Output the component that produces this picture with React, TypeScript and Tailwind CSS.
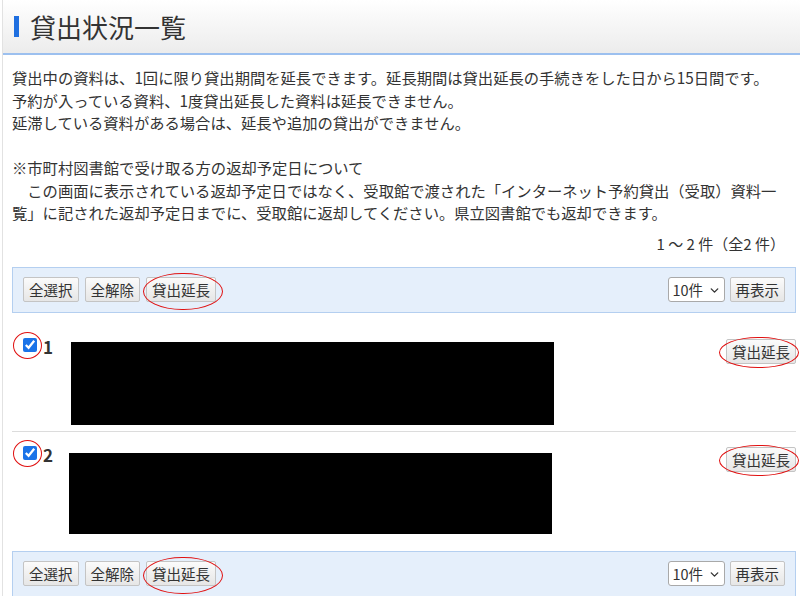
import { ChevronDown } from "lucide-react";

const FONT = { fontFamily: '"Noto Sans CJK JP", "Noto Sans", sans-serif' };

function Btn({ label, ring }: { label: string; ring?: string }) {
  return (
    <div className="relative">
      <button className="h-[25px] px-[5px] text-[14.5px] leading-none text-[#333] border border-[#c4c4c4] rounded-[2px] bg-gradient-to-b from-[#fbfbfb] to-[#e6e6e6]">
        {label}
      </button>
      {ring && <span className={`pointer-events-none absolute border-[1.5px] border-[#e01010] rounded-[50%] ${ring}`} />}
    </div>
  );
}

function Toolbar() {
  return (
    <div className="h-[46px] flex items-center justify-between px-[10px] border border-[#b4cff0] bg-[#e5effb]">
      <div className="flex gap-[6px]">
        <Btn label="全選択" />
        <Btn label="全解除" />
        <Btn label="貸出延長" ring="-left-[3px] -right-[7px] -top-[4px] -bottom-[8px]" />
      </div>
      <div className="flex gap-[5px] items-center">
        <div className="relative">
          <select className="appearance-none h-[25px] w-[57px] pl-[4px] text-[14.5px] text-[#333] bg-white border border-[#a9a9a9] rounded-[3px]">
            <option>10件</option>
          </select>
          <ChevronDown className="pointer-events-none absolute right-[4px] top-[7px] w-[13px] h-[13px] text-[#333]" strokeWidth={2.5} />
        </div>
        <Btn label="再表示" />
      </div>
    </div>
  );
}

function Row({ n, rectTop, rectH, rectLeft, border }: { n: number; rectTop: string; rectH: string; rectLeft: string; border?: boolean }) {
  return (
    <div className={`flex items-start pt-[14px] ${border ? "border-b border-[#dcdcdc] h-[108px]" : "h-[102px]"}`}>
      <div className="relative ml-[11px] w-[14px] h-[14px]">
        <input type="checkbox" defaultChecked className="w-[14px] h-[14px] m-0 block accent-[#1a73e8]" />
        <span className="pointer-events-none absolute border-[1.5px] border-[#e01010] rounded-[50%] -left-[10px] -right-[5px] -top-[6px] -bottom-[7px]" />
      </div>
      <span className="ml-[6px] -mt-[4px] text-[17px] font-bold text-[#333]">{n}</span>
      <div className={`${rectLeft} ${rectTop} ${rectH} w-[483px] bg-black`} />
      <div className="ml-auto mt-[1px]">
        <Btn label="貸出延長" ring="-left-[7px] -right-[3px] -top-[2px] -bottom-[4px]" />
      </div>
    </div>
  );
}

export default function App() {
  return (
    <div className="w-[800px] h-[596px] overflow-hidden bg-white" style={FONT}>
      <div className="ml-[2px] border-l border-[#e2e2e2] h-full">
        <div className="h-[55px] flex items-center bg-gradient-to-b from-white to-[#ececec] border-b-2 border-[#9cc0ef]">
          <span className="ml-[11px] w-[5px] h-[21px] bg-[#1f6fe0]" />
          <h1 className="ml-[11px] text-[26px] text-[#333]">貸出状況一覧</h1>
        </div>
        <div className="pl-[9px] pr-[4px] pt-[11px]">
          <div className="text-[15.3px] leading-[22.5px] text-[#333] whitespace-nowrap">
            <p>貸出中の資料は、1回に限り貸出期間を延長できます。延長期間は貸出延長の手続きをした日から15日間です。</p>
            <p>予約が入っている資料、1度貸出延長した資料は延長できません。</p>
            <p>延滞している資料がある場合は、延長や追加の貸出ができません。</p>
            <p>&nbsp;</p>
            <p>※市町村図書館で受け取る方の返却予定日について</p>
            <p>　この画面に表示されている返却予定日ではなく、受取館で渡された「インターネット予約貸出（受取）資料一</p>
            <p>覧」に記された返却予定日までに、受取館に返却してください。県立図書館でも返却できます。</p>
          </div>
          <div className="mt-[9px] pr-[11px] text-right text-[15px] leading-[22px] text-[#333]">1 ～ 2 件（全2 件）</div>
          <div className="mt-[12px]">
            <Toolbar />
          </div>
          <div className="mt-[11px]">
            <Row n={1} rectLeft="ml-[18px]" rectTop="mt-[4px]" rectH="h-[83px]" border />
            <Row n={2} rectLeft="ml-[16px]" rectTop="mt-[7px]" rectH="h-[81px]" />
          </div>
          <div className="mt-[17px]">
            <Toolbar />
          </div>
        </div>
      </div>
    </div>
  );
}
